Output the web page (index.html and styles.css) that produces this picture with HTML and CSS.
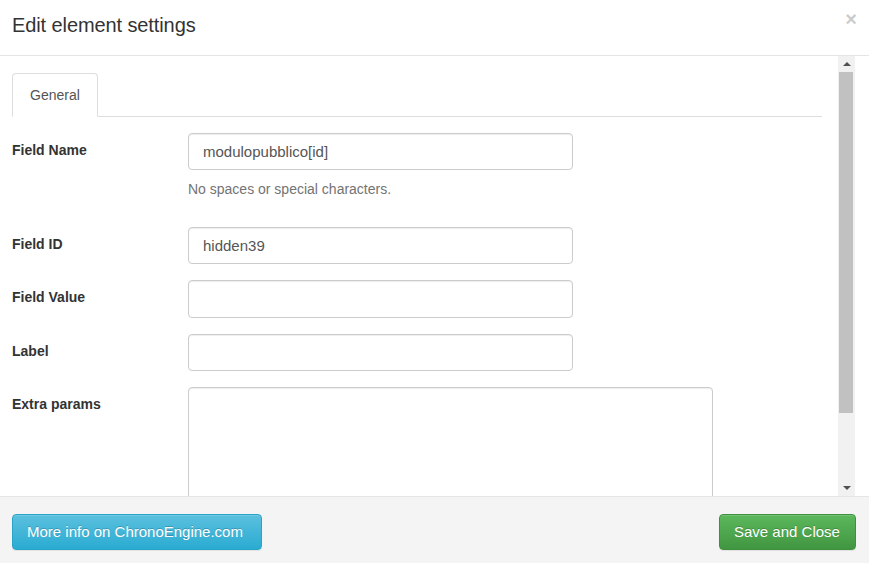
FILE: index.html
```html
<!DOCTYPE html>
<html>
<head>
<meta charset="utf-8">
<title>Edit element settings</title>
<link rel="stylesheet" href="styles.css">
</head>
<body>
<div class="modal">
  <div class="modal-header">
    <h4 class="modal-title">Edit element settings</h4>
    <span class="close">×</span>
  </div>
  <div class="modal-body">
    <div class="content">
      <div class="tabs">
        <div class="tab">General</div>
      </div>
      <div class="form">
        <div class="form-group">
          <label class="label">Field Name</label>
          <div class="field">
            <div class="input">modulopubblico[id]</div>
            <div class="help">No spaces or special characters.</div>
          </div>
        </div>
        <div class="form-group">
          <label class="label">Field ID</label>
          <div class="field"><div class="input">hidden39</div></div>
        </div>
        <div class="form-group">
          <label class="label">Field Value</label>
          <div class="field"><div class="input"></div></div>
        </div>
        <div class="form-group">
          <label class="label">Label</label>
          <div class="field"><div class="input"></div></div>
        </div>
        <div class="form-group">
          <label class="label">Extra params</label>
          <div class="field"><div class="textarea"></div></div>
        </div>
      </div>
    </div>
    <div class="scrollbar">
      <div class="arrow"><span class="tri-up"></span></div>
      <div class="track"><div class="thumb"></div></div>
      <div class="arrow"><span class="tri-down"></span></div>
    </div>
  </div>
  <div class="modal-footer">
    <span class="btn btn-info">More info on ChronoEngine.com</span>
    <span class="btn btn-success">Save and Close</span>
  </div>
</div>
</body>
</html>
```

FILE: styles.css
```css
* { box-sizing: border-box; }
html, body { margin: 0; padding: 0; }
body {
  font-family: "Liberation Sans", Arial, sans-serif;
  font-size: 14px;
  line-height: 20px;
  color: #333;
  background: #fff;
  width: 869px;
  height: 563px;
  overflow: hidden;
}
.modal {
  display: flex;
  flex-direction: column;
  height: 563px;
}
.modal-header {
  height: 56px;
  border-bottom: 1px solid #e5e5e5;
  display: flex;
  align-items: center;
  justify-content: space-between;
  padding: 0 13px 0 12px;
  flex: none;
}
.modal-title {
  margin: 0 0 6px 0;
  font-size: 20px;
  font-weight: normal;
  line-height: 24px;
  color: #333;
  letter-spacing: -0.1px;
}
.close {
  font-size: 20px;
  font-weight: bold;
  color: #000;
  opacity: 0.2;
  margin-bottom: 17px;
  margin-right: -1px;
}
.modal-body {
  height: 440px;
  display: flex;
  flex: none;
  overflow: hidden;
}
.content {
  flex: 1;
  padding: 17px 16px 0 12px;
  overflow: hidden;
}
.tabs {
  border-bottom: 1px solid #ddd;
  display: flex;
  height: 44px;
}
.tab {
  border: 1px solid #ddd;
  border-bottom-color: #fff;
  border-radius: 4px 4px 0 0;
  padding: 11px 17px 11px 17px;
  height: 44px;
  color: #555;
  background: #fff;
  font-size: 14px;
}
.form {
  padding-top: 16px;
}
.form-group {
  display: flex;
  margin-bottom: 16px;
}
.form-group.wide { margin-bottom: 17px; }
.label {
  width: 176px;
  flex: none;
  font-weight: bold;
  padding-top: 7px;
  color: #333;
}
.field { flex: none; }
.input {
  width: 385px;
  height: 37px;
  border: 1px solid #ccc;
  border-radius: 4px;
  box-shadow: inset 0 1px 1px rgba(0,0,0,0.075);
  padding: 7px 14px;
  font-size: 15px;
  line-height: 21px;
  color: #555;
  background: #fff;
}
.form-group:nth-child(3) .input { height: 38px; }
.help {
  color: #737373;
  margin-top: 9px;
  margin-bottom: 12px;
  line-height: 20px;
}
.textarea {
  width: 525px;
  height: 140px;
  border: 1px solid #ccc;
  border-radius: 4px;
  box-shadow: inset 0 1px 1px rgba(0,0,0,0.075);
  background: #fff;
}
.scrollbar {
  width: 17px;
  margin-right: 14px;
  flex: none;
  background: #f1f1f1;
  display: flex;
  flex-direction: column;
}
.arrow {
  height: 16px;
  display: flex;
  align-items: center;
  justify-content: center;
  flex: none;
}
.tri-up {
  width: 0; height: 0;
  border-left: 4px solid transparent;
  border-right: 4px solid transparent;
  border-bottom: 4px solid #505050;
}
.tri-down {
  width: 0; height: 0;
  border-left: 4px solid transparent;
  border-right: 4px solid transparent;
  border-top: 4px solid #505050;
}
.track {
  flex: 1;
  padding: 0 2px 0 1px;
}
.thumb {
  height: 341px;
  background: #c1c1c1;
}
.modal-footer {
  flex: 1;
  border-top: 1px solid #e5e5e5;
  background: #f4f4f4;
  display: flex;
  justify-content: space-between;
  align-items: flex-start;
  padding: 17px 13px 0 12px;
}
.btn {
  display: inline-block;
  height: 36px;
  line-height: 34px;
  padding: 0 13px 0 14px;
  font-size: 15px;
  color: #fff;
  border-radius: 4px;
  border: 1px solid transparent;
  box-shadow: 0 1px 1px rgba(0,0,0,0.075), inset 0 1px 0 rgba(255,255,255,0.15);
  text-shadow: 0 -1px 0 rgba(0,0,0,0.2);
}
.btn-info {
  background: linear-gradient(to bottom, #5bc0de 0%, #2aabd2 100%);
  border-color: #28a4c9;
  width: 250px;
}
.btn-success {
  background: linear-gradient(to bottom, #5cb85c 0%, #419641 100%);
  border-color: #3e8f3e;
  width: 137px;
}
```
